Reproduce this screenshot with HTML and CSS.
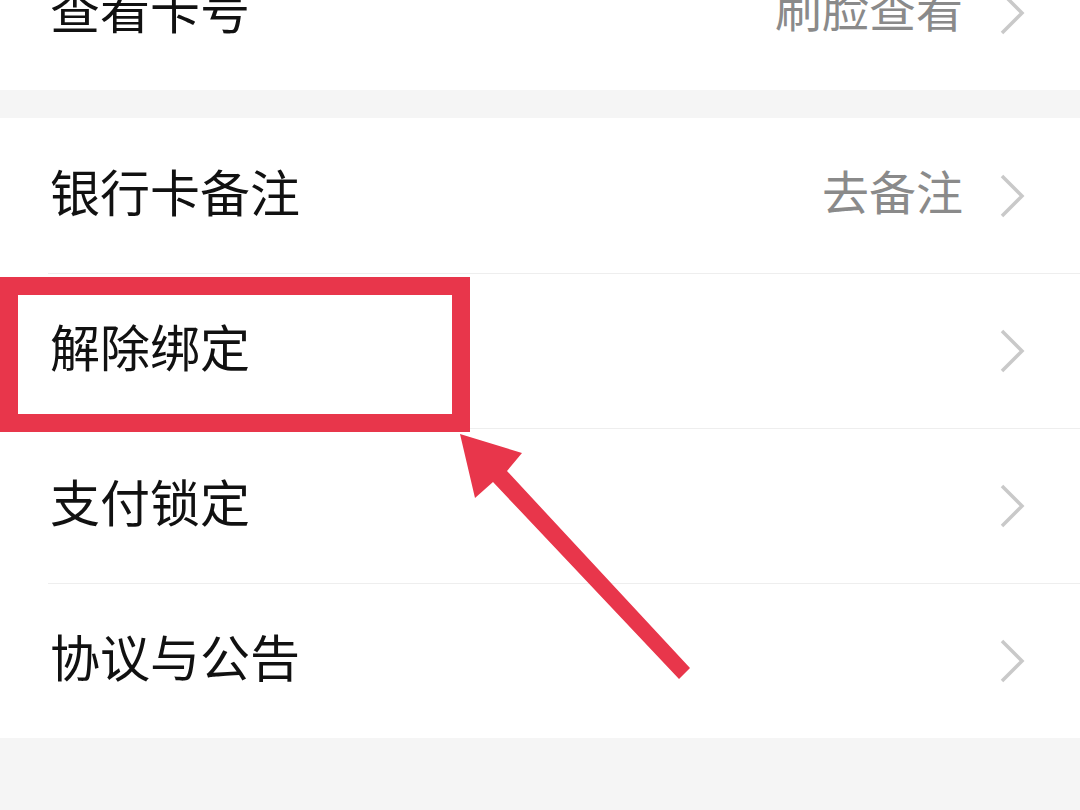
FILE: index.html
```html
<!DOCTYPE html>
<html lang="zh-CN">
<head>
<meta charset="utf-8">
<link rel="stylesheet" href="styles.css">
</head>
<body>
<div class="page">
  <div class="group first">
    <div class="row">
      <span class="label">查看卡号</span>
      <span class="value">刷脸查看</span>
      <svg class="chev" viewBox="0 0 26 44"><path d="M3 2 L23 22 L3 42"/></svg>
    </div>
  </div>
  <div class="group">
    <div class="row">
      <span class="label">银行卡备注</span>
      <span class="value">去备注</span>
      <svg class="chev" viewBox="0 0 26 44"><path d="M3 2 L23 22 L3 42"/></svg>
    </div>
    <div class="row">
      <span class="label">解除绑定</span>
      <svg class="chev" viewBox="0 0 26 44"><path d="M3 2 L23 22 L3 42"/></svg>
    </div>
    <div class="row">
      <span class="label">支付锁定</span>
      <svg class="chev" viewBox="0 0 26 44"><path d="M3 2 L23 22 L3 42"/></svg>
    </div>
    <div class="row">
      <span class="label">协议与公告</span>
      <svg class="chev" viewBox="0 0 26 44"><path d="M3 2 L23 22 L3 42"/></svg>
    </div>
  </div>
  <svg class="annot" width="1080" height="810" viewBox="0 0 1080 810">
    <rect x="9" y="286" width="452" height="137" fill="none" stroke="#e8364b" stroke-width="18"/>
    <polygon points="460,434 522,453 507,471 690,668 679,679 493,482 475,498" fill="#e8364b"/>
  </svg>
</div>
</body>
</html>
```

FILE: styles.css
```css
html, body {
  margin: 0;
  padding: 0;
}
body {
  background: #f5f5f5;
  font-family: "Noto Sans CJK SC", "Noto Sans", sans-serif;
  overflow: hidden;
}
.page {
  position: relative;
  width: 1080px;
  height: 810px;
  overflow: hidden;
}
.group {
  background: #ffffff;
}
.group.first {
  margin-top: -65px;
  margin-bottom: 28px;
}
.row {
  display: flex;
  align-items: center;
  box-sizing: border-box;
  height: 155px;
  margin-left: 48px;
  padding-left: 2px;
  padding-right: 55px;
}
.row + .row {
  border-top: 1px solid #eeeeee;
}
.label,
.value {
  position: relative;
  top: -6px;
}
.label {
  flex: 1;
  font-size: 50px;
  color: #111111;
  line-height: 1;
}
.value {
  font-size: 47px;
  color: #8a8a8a;
  margin-right: 36px;
  line-height: 1;
}
.chev {
  width: 26px;
  height: 44px;
  fill: none;
  stroke: #c9c9c9;
  stroke-width: 3.5;
}
.annot {
  position: absolute;
  left: 0;
  top: 0;
  pointer-events: none;
}
```
